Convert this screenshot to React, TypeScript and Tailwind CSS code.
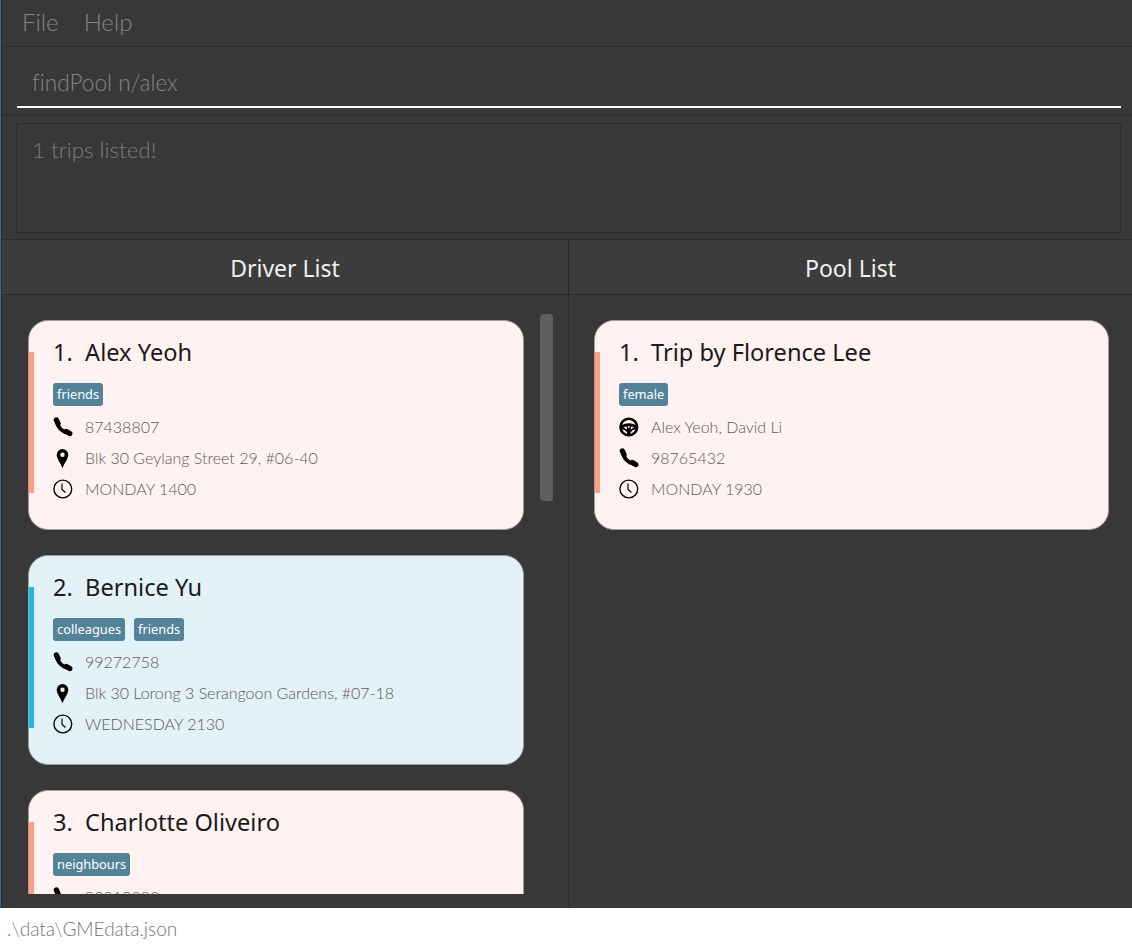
import { type ReactNode } from "react";

type Detail = { icon: ReactNode; text: string };

function PhoneIcon() {
  return (
    <svg viewBox="0 0 20 20" className="h-5 w-5 shrink-0" fill="none" stroke="#000" strokeLinecap="round">
      <path d="M3.800 3.500C4 10 9.500 15.500 16 16" strokeWidth="3.800" />
      <path d="M3.400 3 5 6.500" strokeWidth="5.400" />
      <path d="M13.300 14.500 16.800 16.600" strokeWidth="5.200" />
    </svg>
  );
}

function PinIcon() {
  return (
    <svg viewBox="0 0 20 20" className="h-5 w-5 shrink-0">
      <path
        fillRule="evenodd"
        d="M9.500 1a5.800 5.800 0 0 0-5.800 5.800c0 3.600 3.700 8.400 5.800 13.200 2.100-4.800 5.800-9.600 5.800-13.200A5.800 5.800 0 0 0 9.500 1zm0 3.600a2.200 2.200 0 1 1 0 4.400 2.200 2.200 0 0 1 0-4.400z"
        fill="#000"
      />
    </svg>
  );
}

function ClockIcon() {
  return (
    <svg viewBox="0 0 20 20" className="h-5 w-5 shrink-0" fill="none" stroke="#000">
      <circle cx="9.800" cy="10" r="8.900" strokeWidth="1.400" />
      <path d="M9 4.500v6l3.500 3" strokeWidth="1.200" />
    </svg>
  );
}

function WheelIcon() {
  return (
    <svg viewBox="0 0 20 20" className="h-5 w-5 shrink-0" fill="none" stroke="#000">
      <circle cx="9.800" cy="10" r="8.300" strokeWidth="2.600" />
      <path d="M2 10.500c3-2.500 4.500-2.700 7.800-2.700s4.800.2 7.800 2.700" strokeWidth="3" />
      <path d="M9.800 9v9" strokeWidth="3.600" />
      <path d="M3 11.500c2.500.2 4.500 1 5 3M16.600 11.500c-2.500.2-4.500 1-5 3" strokeWidth="2" />
      <circle cx="9.800" cy="10" r="1.500" fill="#fff" strokeWidth="1.200" />
    </svg>
  );
}

function Card({
  title,
  tags,
  details,
  accent,
  bg,
  width,
}: {
  title: string;
  tags: string[];
  details: Detail[];
  accent: string;
  bg: string;
  width: string;
}) {
  return (
    <div className={`flex h-[210px] shrink-0 overflow-hidden rounded-[20px] border border-[#a39d9d] ${width} ${bg}`}>
      <div className={`mt-[31px] h-[141px] w-[5px] shrink-0 ${accent}`} />
      <div className="flex flex-col pl-[19px] pt-[14px]">
        <p className="h-[34px] whitespace-pre text-[23.6px] leading-[34px] text-[#1a1a1a] font-['Noto_Sans',sans-serif]">
          {title}
        </p>
        <div className="mt-[14px] flex gap-[9px]">
          {tags.map((tag) => (
            <span
              key={tag}
              className="flex h-[23px] items-center rounded-[3px] bg-[#528399] px-[4px] text-[12.8px] text-white font-['Noto_Sans',sans-serif]"
            >
              {tag}
            </span>
          ))}
        </div>
        <div className="mt-[5px] flex flex-col">
          {details.map((d) => (
            <div key={d.text} className="flex h-[31px] items-center gap-[12px]">
              {d.icon}
              <span className="text-[16px] font-light text-[#5f5858]">{d.text}</span>
            </div>
          ))}
        </div>
      </div>
    </div>
  );
}

function ListHeader({ label }: { label: string }) {
  return (
    <div className="flex h-[55px] items-center justify-center border-b border-[#2b2b2b] bg-[#3c3c3c] pt-[2px] text-[23px] text-[#f0f0f0] font-['Noto_Sans',sans-serif]">
      {label}
    </div>
  );
}

export default function App() {
  return (
    <div className="flex h-[948px] w-[1132px] flex-col overflow-hidden bg-[#383838] font-['Lato',sans-serif] [font-variant-ligatures:none]">
      <div className="flex min-h-0 flex-1 border-l border-[#2a6aa8]">
        <div className="flex min-w-0 flex-1 flex-col border-l border-[#2e2e2e]">
          {/* menu bar */}
          <div className="flex h-[47px] shrink-0 items-center gap-[25px] border-b border-[#2b2b2b] pl-[20px] pb-[2px] text-[24px] font-light text-[#858585]">
            <span>File</span>
            <span>Help</span>
          </div>

          {/* command box */}
          <div className="flex h-[69px] shrink-0 flex-col border-b-2 border-[#2f2f2f] pl-[15px] pr-[11px] pt-[7px]">
            <div className="flex h-[54px] items-center border-b-2 border-white pl-[15px] pt-[5px] text-[22.6px] font-light text-[#858585]">
              findPool n/alex
            </div>
          </div>

          {/* result box */}
          <div className="h-[124px] shrink-0 border-b border-[#2b2b2b] px-[14px] pt-[7px]">
            <div className="h-[110px] w-[1105px] border border-[#2b2b2b] pl-[15px] pt-[9px] text-[22.4px] font-light text-[#7c7c7c]">
              1 trips listed!
            </div>
          </div>

          {/* lists */}
          <div className="flex min-h-0 flex-1">
            <div className="relative flex w-[567px] shrink-0 flex-col border-r border-[#2b2b2b]">
              <ListHeader label="Driver List" />
              <div className="flex min-h-0 flex-1 flex-col pb-[14px]">
                <div className="flex min-h-0 flex-1 flex-col gap-[25px] overflow-hidden pl-[26px] pt-[25px]">
                  <Card
                    title="1.  Alex Yeoh"
                    tags={["friends"]}
                    accent="bg-[#ff9e80]"
                    bg="bg-[#fff2f0]"
                    width="w-[496px]"
                    details={[
                      { icon: <PhoneIcon />, text: "87438807" },
                      { icon: <PinIcon />, text: "Blk 30 Geylang Street 29, #06-40" },
                      { icon: <ClockIcon />, text: "MONDAY 1400" },
                    ]}
                  />
                  <Card
                    title="2.  Bernice Yu"
                    tags={["colleagues", "friends"]}
                    accent="bg-[#1fb8e8]"
                    bg="bg-[#e2f2f8]"
                    width="w-[496px]"
                    details={[
                      { icon: <PhoneIcon />, text: "99272758" },
                      { icon: <PinIcon />, text: "Blk 30 Lorong 3 Serangoon Gardens, #07-18" },
                      { icon: <ClockIcon />, text: "WEDNESDAY 2130" },
                    ]}
                  />
                  <Card
                    title="3.  Charlotte Oliveiro"
                    tags={["neighbours"]}
                    accent="bg-[#ff9e80]"
                    bg="bg-[#fff2f0]"
                    width="w-[496px]"
                    details={[{ icon: <PhoneIcon />, text: "93210283" }]}
                  />
                </div>
              </div>
              <div className="absolute left-[538px] top-[74px] h-[187px] w-[13px] rounded-[4px] bg-[#5f5f5f]" />
            </div>

            <div className="flex min-w-0 flex-1 flex-col">
              <ListHeader label="Pool List" />
              <div className="pl-[25px] pt-[25px]">
                <Card
                  title="1.  Trip by Florence Lee"
                  tags={["female"]}
                  accent="bg-[#ff9e80]"
                  bg="bg-[#fff2f0]"
                  width="w-[515px]"
                  details={[
                    { icon: <WheelIcon />, text: "Alex Yeoh, David Li" },
                    { icon: <PhoneIcon />, text: "98765432" },
                    { icon: <ClockIcon />, text: "MONDAY 1930" },
                  ]}
                />
              </div>
            </div>
          </div>
        </div>
      </div>

      {/* status bar */}
      <div className="flex h-[40px] shrink-0 items-center bg-white pl-[7px] pt-[2px] text-[19px] leading-[24px] font-light text-[#757575]">
        .\data\GMEdata.json
      </div>
    </div>
  );
}
